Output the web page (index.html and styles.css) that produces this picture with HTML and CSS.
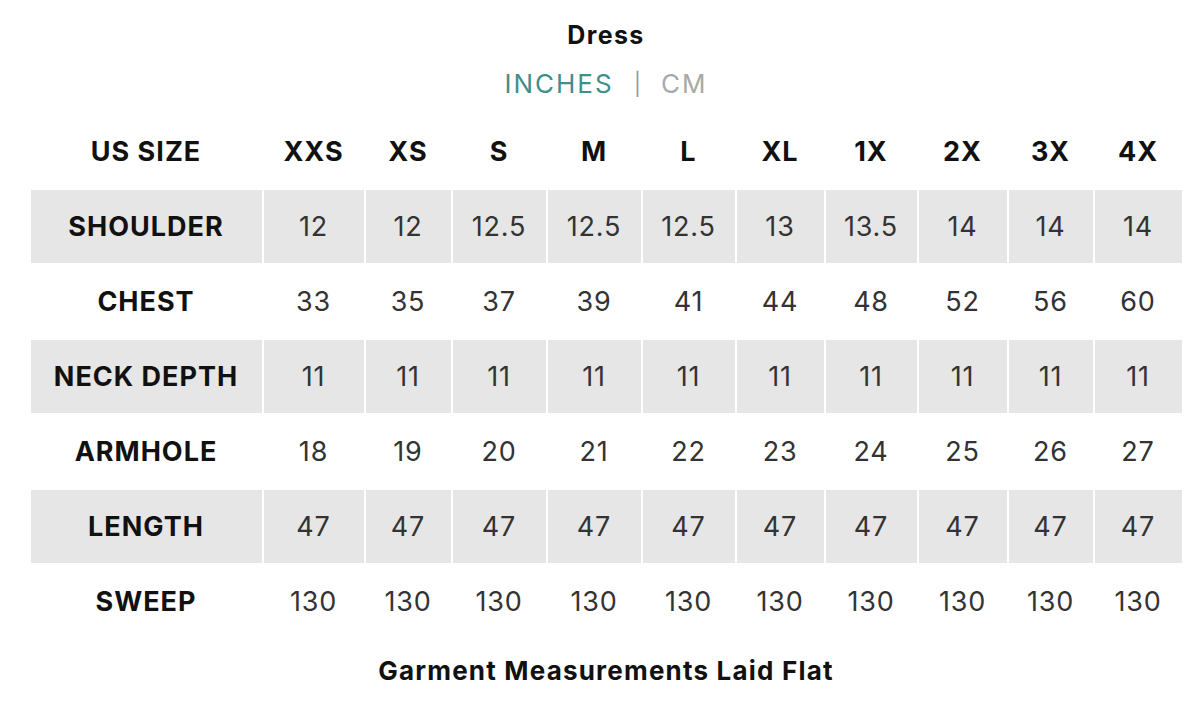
FILE: index.html
```html
<!DOCTYPE html>
<html lang="en">
<head>
<meta charset="utf-8">
<title>Dress Size Chart</title>
<link rel="stylesheet" href="styles.css">
</head>
<body>
<main class="chart">
  <h1 class="chart-title">Dress</h1>
  <div class="units">
    <span class="unit unit-active">INCHES</span>
    <span class="unit-sep">|</span>
    <span class="unit">CM</span>
  </div>
  <table class="size-table">
    <colgroup>
      <col class="c-label">
      <col class="c-xxs"><col class="c-xs"><col class="c-s"><col class="c-m"><col class="c-l">
      <col class="c-xl"><col class="c-1x"><col class="c-2x"><col class="c-3x"><col class="c-4x">
    </colgroup>
    <thead>
      <tr>
        <th>US SIZE</th><th>XXS</th><th>XS</th><th>S</th><th>M</th><th>L</th><th>XL</th><th>1X</th><th>2X</th><th>3X</th><th>4X</th>
      </tr>
    </thead>
    <tbody>
      <tr class="shaded">
        <th>SHOULDER</th><td>12</td><td>12</td><td>12.5</td><td>12.5</td><td>12.5</td><td>13</td><td>13.5</td><td>14</td><td>14</td><td>14</td>
      </tr>
      <tr>
        <th>CHEST</th><td>33</td><td>35</td><td>37</td><td>39</td><td>41</td><td>44</td><td>48</td><td>52</td><td>56</td><td>60</td>
      </tr>
      <tr class="shaded">
        <th>NECK DEPTH</th><td>11</td><td>11</td><td>11</td><td>11</td><td>11</td><td>11</td><td>11</td><td>11</td><td>11</td><td>11</td>
      </tr>
      <tr>
        <th>ARMHOLE</th><td>18</td><td>19</td><td>20</td><td>21</td><td>22</td><td>23</td><td>24</td><td>25</td><td>26</td><td>27</td>
      </tr>
      <tr class="shaded">
        <th>LENGTH</th><td>47</td><td>47</td><td>47</td><td>47</td><td>47</td><td>47</td><td>47</td><td>47</td><td>47</td><td>47</td>
      </tr>
      <tr>
        <th>SWEEP</th><td>130</td><td>130</td><td>130</td><td>130</td><td>130</td><td>130</td><td>130</td><td>130</td><td>130</td><td>130</td>
      </tr>
    </tbody>
  </table>
  <p class="caption">Garment Measurements Laid Flat</p>
</main>
</body>
</html>
```
FILE: styles.css
```css
html, body {
  margin: 0;
  padding: 0;
  background: #ffffff;
}

body {
  font-family: Inter, "Liberation Sans", Arial, sans-serif;
  color: #1a1a1a;
}

.chart {
  width: 1156px;
  padding: 20px 16px 0 28px;
  display: flex;
  flex-direction: column;
  align-items: center;
}

.chart-title {
  margin: 0;
  font-size: 25px;
  line-height: 30px;
  font-weight: 700;
  letter-spacing: 1.4px;
  color: #111;
}

.units {
  margin-top: 19px;
  display: flex;
  align-items: center;
  gap: 20px;
  font-size: 26px;
  line-height: 30px;
  letter-spacing: 2px;
}

.unit {
  color: #a9a9a9;
}

.unit-active {
  color: #3f8f8b;
}

.unit-sep {
  color: #9a9a9a;
  font-size: 22px;
  letter-spacing: 0;
}

.size-table {
  margin-top: 14px;
  border-collapse: separate;
  border-spacing: 2px;
  table-layout: fixed;
  width: 1154px;
}

.c-label { width: 231px; }
.c-xxs { width: 100px; }
.c-xs { width: 85px; }
.c-s { width: 93px; }
.c-m { width: 93px; }
.c-l { width: 92px; }
.c-xl { width: 87px; }
.c-1x { width: 91px; }
.c-2x { width: 88px; }
.c-3x { width: 84px; }
.c-4x { width: 87px; }

.size-table th,
.size-table td {
  height: 73px;
  padding: 0;
  text-align: center;
  vertical-align: middle;
  font-size: 27px;
}

.size-table th {
  font-weight: 700;
  letter-spacing: 1px;
  color: #111;
}

.size-table td {
  font-weight: 400;
  letter-spacing: 0.8px;
  color: #333;
}

.shaded th,
.shaded td {
  background: #e6e6e6;
}

.caption {
  margin: 16px 0 0;
  font-size: 26px;
  line-height: 30px;
  font-weight: 700;
  letter-spacing: 1.2px;
  word-spacing: 0;
  color: #111;
}
```
